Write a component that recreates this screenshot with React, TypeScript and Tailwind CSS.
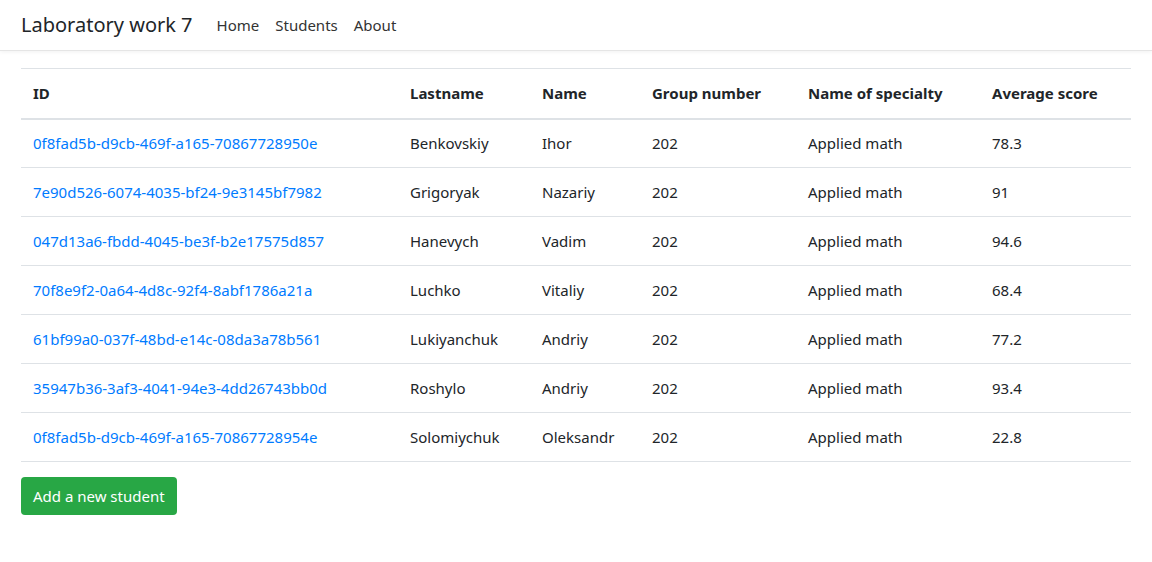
const rows = [
  ["0f8fad5b-d9cb-469f-a165-70867728950e","Benkovskiy","Ihor","78.3"],
  ["7e90d526-6074-4035-bf24-9e3145bf7982","Grigoryak","Nazariy","91"],
  ["047d13a6-fbdd-4045-be3f-b2e17575d857","Hanevych","Vadim","94.6"],
  ["70f8e9f2-0a64-4d8c-92f4-8abf1786a21a","Luchko","Vitaliy","68.4"],
  ["61bf99a0-037f-48bd-e14c-08da3a78b561","Lukiyanchuk","Andriy","77.2"],
  ["35947b36-3af3-4041-94e3-4dd26743bb0d","Roshylo","Andriy","93.4"],
  ["0f8fad5b-d9cb-469f-a165-70867728954e","Solomiychuk","Oleksandr","22.8"],
];
export default function App() {
  return (
    <div className="min-h-[562px] bg-white text-[#212529]" style={{ fontFamily: '"Segoe UI","Noto Sans",sans-serif' }}>
      <nav className="h-[51px] flex items-center px-[21px] border-b border-[#e5e5e5] shadow-[0_1px_4px_rgba(0,0,0,0.06)]">
        <span className="text-[20px] mr-[24px]">Laboratory work 7</span>
        <div className="flex gap-[16px] text-[15px] text-[#333]">
          <span>Home</span><span>Students</span><span>About</span>
        </div>
      </nav>
      <div className="px-[21px] pt-[17px]">
        <table className="w-[1110px] text-[15px] border-collapse">
          <thead>
            <tr className="border-t border-[#dee2e6] border-b-2 border-b-[#dee2e6] h-[50px] text-left">
              <th className="pl-[12px] w-[389px] font-bold">ID</th>
              <th className="w-[132px] font-bold">Lastname</th>
              <th className="w-[110px] font-bold">Name</th>
              <th className="w-[156px] font-bold">Group number</th>
              <th className="w-[184px] font-bold">Name of specialty</th>
              <th className="font-bold">Average score</th>
            </tr>
          </thead>
          <tbody>
            {rows.map((r, i) => (
              <tr key={i} className="border-b border-[#dee2e6] h-[49px]">
                <td className="pl-[12px] text-[#007bff]">{r[0]}</td>
                <td>{r[1]}</td><td>{r[2]}</td><td>202</td><td>Applied math</td><td>{r[3]}</td>
              </tr>
            ))}
          </tbody>
        </table>
        <button className="mt-[15px] h-[38px] px-[12px] rounded-[4px] bg-[#28a745] text-white text-[15px]">Add a new student</button>
      </div>
    </div>
  );
}
